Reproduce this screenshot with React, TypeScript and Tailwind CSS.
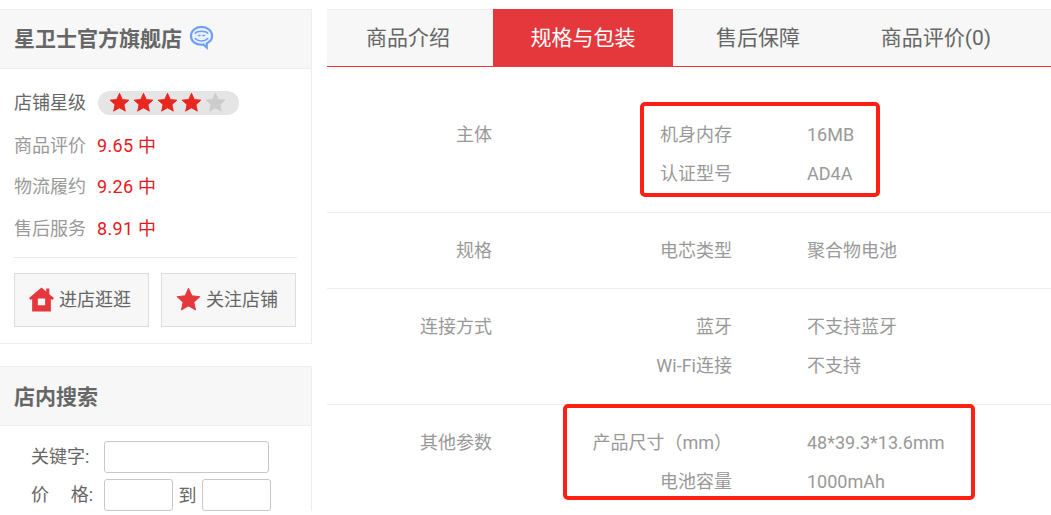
const FONT = "font-['Roboto','Noto_Sans_CJK_SC',sans-serif]";

function Star({ className }: { className: string }) {
  return (
    <svg viewBox="0 0 24 24" className={className} fill="currentColor">
      <path d="M12 1.5l3.2 7 7.6.8-5.7 5.1 1.6 7.500L12 18.100l-6.700 3.800 1.600-7.500L1.200 9.300l7.600-.8z" stroke="currentColor" strokeWidth="1" strokeLinejoin="round" />
    </svg>
  );
}

function HomeIcon() {
  return (
    <svg viewBox="0 0 24 24" className="w-[25px] h-[25px] text-[#e5383d]" fill="currentColor">
      <path fillRule="evenodd" d="M12 0.5l4.500 3.800V1.500h3v5.400L24 10.600l-1.600 1.900-1.400-1.100V23.500H3V11.400l-1.400 1.100L0 10.600zM8.500 11v6.500h7V11z" />
    </svg>
  );
}

function ChatIcon() {
  return (
    <svg viewBox="0 0 26 26" className="w-[25px] h-[25px] ml-[7px] mb-[3px]" fill="none">
      <path d="M13 2C6.800 2 2 6 2 11.500S6.800 20.500 13 20.500c.8 0 1.500 0 2-.2l3.500 3.200v-4.400c3.300-1.600 5.500-4.300 5.500-7.600C24 6 19.200 2 13 2z" stroke="#6e9ff5" strokeWidth="2.200" fill="#e8f0fe" />
      <path d="M6.500 8.500c2-2.600 11-2.600 13 0M6.500 14c3 3.400 10 3.400 13 0" stroke="#6e9ff5" strokeWidth="1.600" strokeLinecap="round" />
      <path d="M10 11h1.500M14.500 11H16" stroke="#6e9ff5" strokeWidth="1.600" strokeLinecap="round" />
    </svg>
  );
}

const scores = [
  { label: '商品评价', value: '9.65 中', height: 'h-[42px]' },
  { label: '物流履约', value: '9.26 中', height: 'h-[41px]' },
  { label: '售后服务', value: '8.91 中', height: 'h-[42px]' },
];

const specs = [
  { name: '主体', pad: 'pt-[48px] pb-[19px]', items: [['机身内存', '16MB'], ['认证型号', 'AD4A']] },
  { name: '规格', pad: 'pt-[18px] pb-[18px]', items: [['电芯类型', '聚合物电池']] },
  { name: '连接方式', pad: 'pt-[18px] pb-[19px]', items: [['蓝牙', '不支持蓝牙'], ['Wi-Fi连接', '不支持']] },
  { name: '其他参数', pad: 'pt-[18px] pb-[19px]', items: [['产品尺寸（mm）', '48*39.3*13.6mm'], ['电池容量', '1000mAh']] },
];

function Sidebar() {
  return (
    <div className="w-[312px] shrink-0">
      <div className="border-t border-r border-b border-[#eeeeee] h-[335px]">
        <div className="h-[59px] bg-[#f7f7f7] border-b border-[#eeeeee] flex items-center pl-[14px]">
          <span className="text-[21px] font-bold text-[#666666] pt-[1px]">星卫士官方旗舰店</span>
          <ChatIcon />
        </div>
        <div className="px-[14px] pt-[12px]">
          <div className="h-[43px] flex items-center text-[18px] text-[#666666]">
            <span>店铺星级</span>
            <div className="ml-[12px] w-[141px] h-[24px] rounded-full bg-[#e5e5e5] flex items-center pl-[11px] gap-[3px]">
              {[0, 1, 2, 3].map((i) => (
                <Star key={i} className="w-[21px] h-[21px] text-[#ea2620]" />
              ))}
              <Star className="w-[21px] h-[21px] text-[#cccccc]" />
            </div>
          </div>
          {scores.map((s) => (
            <div key={s.label} className={`${s.height} flex items-center text-[18px]`}>
              <span className="text-[#999999]">{s.label}</span>
              <span className="ml-[11px] text-[#e8181d] tracking-[0.3px]">{s.value}</span>
            </div>
          ))}
          <div className="mt-[8px] border-t border-[#e8e8e8] pt-[15px] flex gap-[12px]">
            <div className="w-[135px] h-[54px] bg-[#f7f7f7] border border-[#dddddd] flex items-center justify-center gap-[5px] pr-[3px] pb-[2px] text-[18px] text-[#666666]">
              <HomeIcon />
              <span>进店逛逛</span>
            </div>
            <div className="w-[135px] h-[54px] bg-[#f7f7f7] border border-[#dddddd] flex items-center justify-center gap-[5px] pr-[3px] pb-[2px] text-[18px] text-[#666666]">
              <Star className="w-[25px] h-[25px] text-[#e5383d]" />
              <span>关注店铺</span>
            </div>
          </div>
        </div>
      </div>
      <div className="mt-[22px] border-t border-r border-[#eeeeee]">
        <div className="h-[59px] bg-[#f7f7f7] border-b border-[#eeeeee] flex items-center pl-[14px]">
          <span className="text-[21px] font-bold text-[#666666] pt-[3px]">店内搜索</span>
        </div>
        <div className="pl-[31px] pt-[15px] text-[18px] text-[#666666]">
          <div className="flex items-center">
            <span className="w-[73px] pb-[2px]">关键字:</span>
            <div className="w-[165px] h-[32px] border border-[#c8c8c8] rounded-[3px] bg-white" />
          </div>
          <div className="flex items-center mt-[6px]">
            <span className="w-[73px] flex justify-between pr-[11px] pb-[2px]"><span>价</span><span>格:</span></span>
            <div className="w-[69px] h-[32px] border border-[#c8c8c8] rounded-[3px] bg-white" />
            <span className="w-[29px] text-center">到</span>
            <div className="w-[69px] h-[32px] border border-[#c8c8c8] rounded-[3px] bg-white" />
          </div>
        </div>
      </div>
    </div>
  );
}

export default function App() {
  const tabs = [
    { label: '商品介绍', width: 'w-[166px] pr-[4px]', active: false },
    { label: '规格与包装', width: 'w-[180px]', active: true },
    { label: '售后保障', width: 'w-[170px]', active: false },
    { label: '商品评价(0)', width: 'w-[186px]', active: false },
  ];

  return (
    <div className={`${FONT} relative w-[1051px] h-[515px] overflow-hidden bg-white pt-[9px] flex`}>
      <Sidebar />
      <div className="ml-[15px] flex-1">
        <div className="h-[58px] bg-[#f7f7f7] border-t border-[#eeeeee] border-b border-b-[#e8383d] flex">
          {tabs.map((t) => (
            <div
              key={t.label}
              className={`${t.width} -mt-px h-[57px] pt-[2px] flex items-center justify-center text-[21px] ${t.active ? 'bg-[#e5383d] text-white' : 'text-[#666666]'}`}
            >
              {t.label}
            </div>
          ))}
        </div>
        {specs.map((row) => (
          <div key={row.name} className={`${row.pad} border-b border-[#eeeeee] flex text-[18px] leading-[39px] text-[#999999]`}>
            <div className="w-[165px] text-right">{row.name}</div>
            <div>
              {row.items.map(([k, v]) => (
                <div key={k} className="flex">
                  <div className="w-[240px] text-right">{k}</div>
                  <div className="ml-[75px]">{v}</div>
                </div>
              ))}
            </div>
          </div>
        ))}
      </div>
      <div className="absolute left-[640px] top-[102px] w-[240px] h-[95px] border-[4px] border-[#ff2014] rounded-[5px]" />
      <div className="absolute left-[563px] top-[404px] w-[412px] h-[96px] border-[4px] border-[#ff2014] rounded-[5px]" />
    </div>
  );
}
